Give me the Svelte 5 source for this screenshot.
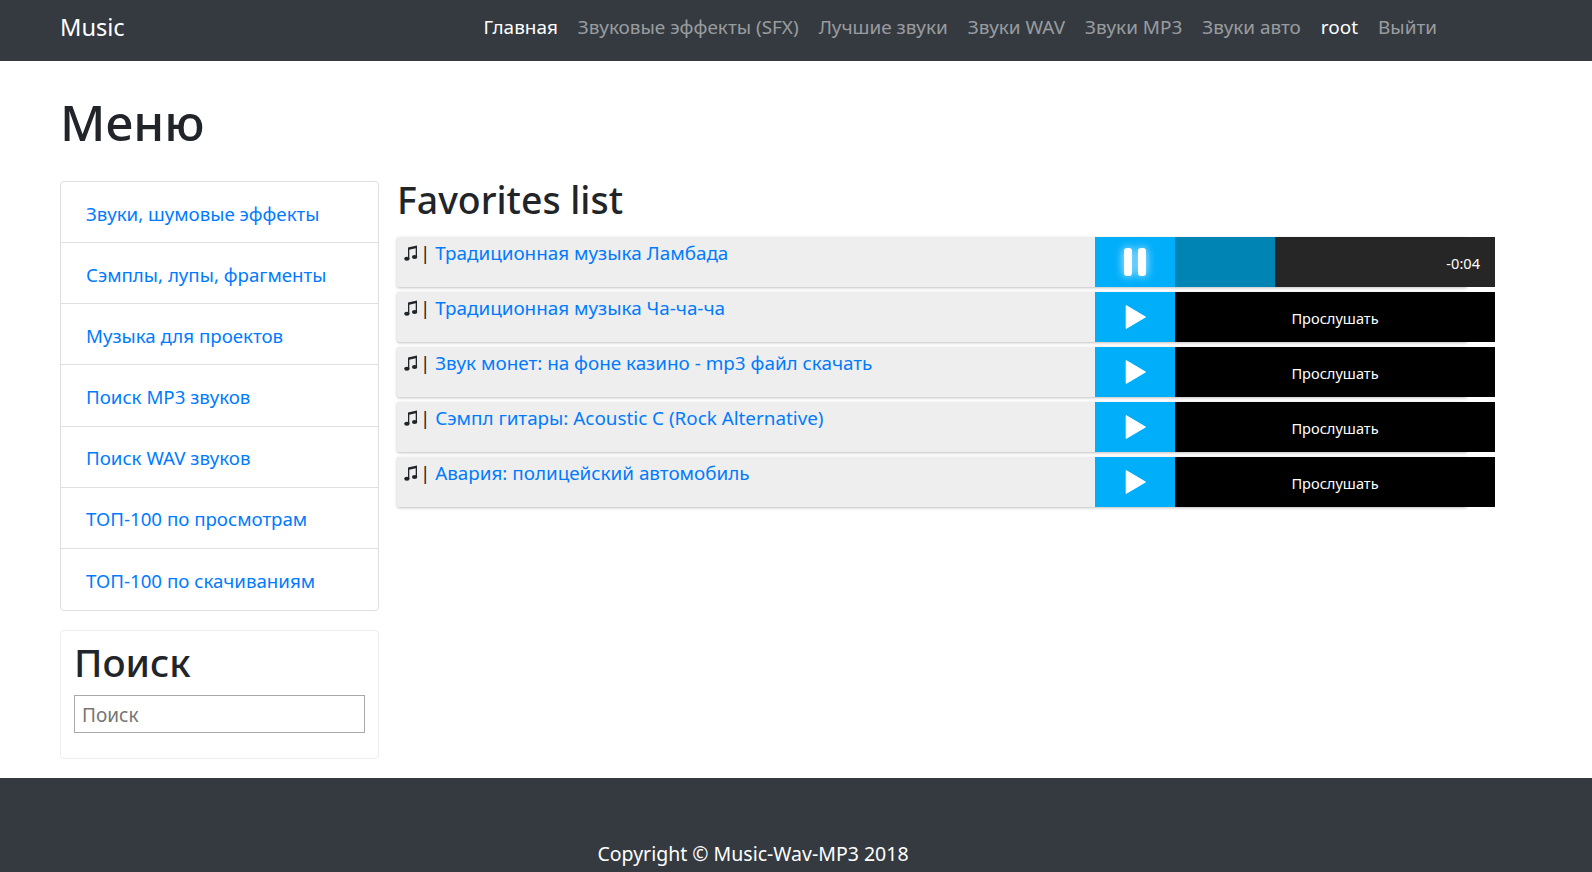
<script>
  const nav = [
    { label: 'Главная', cls: 'on' },
    { label: 'Звуковые эффекты (SFX)' },
    { label: 'Лучшие звуки' },
    { label: 'Звуки WAV' },
    { label: 'Звуки MP3' },
    { label: 'Звуки авто' },
    { label: 'root', cls: 'on' },
    { label: 'Выйти' }
  ];

  const menu = [
    'Звуки, шумовые эффекты',
    'Сэмплы, лупы, фрагменты',
    'Музыка для проектов',
    'Поиск MP3 звуков',
    'Поиск WAV звуков',
    'ТОП-100 по просмотрам',
    'ТОП-100 по скачиваниям'
  ];

  const tracks = [
    { title: 'Традиционная музыка Ламбада', playing: true },
    { title: 'Традиционная музыка Ча-ча-ча' },
    { title: 'Звук монет: на фоне казино - mp3 файл скачать' },
    { title: 'Сэмпл гитары: Acoustic C (Rock Alternative)' },
    { title: 'Авария: полицейский автомобиль' }
  ];
</script>

<nav class="navbar">
  <a class="brand" href="#top">Music</a>
  <ul class="nav-links">
    {#each nav as item}
      <li><a href="#top" class={item.cls}>{item.label}</a></li>
    {/each}
  </ul>
</nav>

<div class="page">
  <h1>Меню</h1>
  <div class="columns">
    <aside>
      <div class="list-group">
        {#each menu as item}
          <a class="list-item" href="#top">{item}</a>
        {/each}
      </div>
      <div class="search-card">
        <h2>Поиск</h2>
        <input type="text" placeholder="Поиск" />
      </div>
    </aside>

    <main>
      <h2 class="fav-title">Favorites list</h2>
      {#each tracks as track}
        <div class="track">
          <div class="track-title">
            <svg class="note" viewBox="0 0 14 16" width="14" height="16" aria-hidden="true">
              <path d="M4 2.6 13 .6V12h-1.300V3.300L5.300 4.800V14H4Z" fill="#212529" />
              <ellipse cx="2.900" cy="13.700" rx="2.700" ry="2" fill="#212529" />
              <ellipse cx="10.600" cy="11.900" rx="2.700" ry="2" fill="#212529" />
            </svg>
            | <a href="#top">{track.title}</a>
          </div>
          <div class="player" class:playing={track.playing}>
            <div class="play-btn">
              {#if track.playing}
                <span class="bars"><i></i><i></i></span>
              {:else}
                <svg viewBox="0 0 21 24" width="21" height="24" aria-hidden="true">
                  <path d="M1.200 .6 20.500 12 1.200 23.400Z" fill="#fff" stroke="#fff" stroke-linejoin="round" />
                </svg>
              {/if}
            </div>
            <div class="bar">
              {#if track.playing}
                <div class="progress"></div>
                <span class="time">-0:04</span>
              {:else}
                <span class="listen">Прослушать</span>
              {/if}
            </div>
          </div>
        </div>
      {/each}
    </main>
  </div>
</div>

<footer>
  <p>Copyright © Music-Wav-MP3 2018</p>
</footer>

<style>
  :global(body) {
    margin: 0;
    font-family: "Noto Sans", "Open Sans", sans-serif;
    font-size: 19px;
    line-height: 1.5;
    color: #212529;
    background: #fff;
  }

  a {
    text-decoration: none;
    color: #007bff;
  }

  .navbar {
    display: flex;
    align-items: center;
    height: 61px;
    padding: 0 60px 6px;
    background: #343a40;
    box-sizing: border-box;
  }

  .brand {
    color: #fff;
    font-size: 23.600px;
  }

  .nav-links {
    display: flex;
    gap: 20px;
    margin: 0 0 0 auto;
    padding: 0 95px 0 0;
    list-style: none;
    font-size: 18.930px;
  }

  .nav-links a {
    color: rgba(255, 255, 255, 0.5);
  }

  .nav-links a.on {
    color: #fff;
  }

  .page {
    padding: 0 60px;
  }

  h1 {
    margin: 0;
    padding-top: 25px;
    height: 95px;
    font-size: 49.500px;
    font-weight: 500;
    line-height: 72px;
    box-sizing: content-box;
  }

  .columns {
    display: flex;
    align-items: flex-start;
    padding-bottom: 19px;
  }

  aside {
    width: 319px;
    flex: none;
  }

  .list-group {
    display: flex;
    flex-direction: column;
    border: 1px solid #dfdfdf;
    border-radius: 4px;
  }

  .list-item {
    height: 61.150px;
    padding: 3px 25px 0;
    display: flex;
    align-items: center;
    box-sizing: border-box;
    border-bottom: 1px solid #dfdfdf;
    font-size: 18.700px;
  }

  .list-item:last-child {
    border-bottom: 0;
  }

  .search-card {
    margin-top: 19px;
    padding: 4px 13px 25px;
    height: 129px;
    box-sizing: border-box;
    border: 1px solid #eee;
    border-radius: 4px;
  }

  .search-card h2 {
    margin: 0 0 6px;
    font-size: 38.400px;
    font-weight: 500;
    line-height: 54px;
  }

  .search-card input {
    display: block;
    width: 100%;
    height: 38px;
    padding: 3px 7px 0;
    box-sizing: border-box;
    border: 1px solid #a9a9a9;
    font: inherit;
    border-radius: 0;
    outline: none;
  }

  .search-card input::placeholder {
    color: #757575;
  }

  main {
    flex: 1;
    margin-left: 18px;
    margin-right: 65px;
    min-width: 0;
  }

  .fav-title {
    margin: -6px 0 13px 0;
    font-size: 37.400px;
    font-weight: 500;
    line-height: 49px;
  }

  .track {
    display: flex;
    justify-content: space-between;
    height: 50px;
    margin-bottom: 5px;
    background: #eee;
    border-radius: 2px;
    box-shadow: 0 1px 3px rgba(0, 0, 0, 0.25);
  }

  .track-title {
    padding-left: 7px;
    font-size: 18.850px;
    line-height: 32px;
    white-space: nowrap;
  }

  .note {
    vertical-align: -1px;
    margin-right: -3px;
  }

  .player {
    display: flex;
    width: 400px;
    height: 50px;
    margin-right: -28px;
    flex: none;
    color: #fff;
    font-size: 14.600px;
  }

  .play-btn {
    width: 80px;
    flex: none;
    display: flex;
    align-items: center;
    justify-content: center;
    background: #00aefa;
  }

  .bars {
    display: flex;
    gap: 6px;
  }

  .bars i {
    display: block;
    width: 8px;
    height: 28px;
    background: #fff;
    border-radius: 3px;
    box-shadow: 0 0 10px rgba(255, 255, 255, 0.85);
  }

  .bar {
    flex: 1;
    position: relative;
    display: flex;
    align-items: center;
    justify-content: center;
    background: #000;
  }

  .playing .bar {
    background: #262626;
  }

  .progress {
    position: absolute;
    left: 0;
    top: 0;
    bottom: 0;
    width: 100px;
    background: #0084b4;
  }

  .time {
    position: absolute;
    right: 15px;
    top: 16px;
    line-height: 20px;
  }

  .listen {
    line-height: 20px;
    padding-top: 2px;
  }

  footer {
    height: 94px;
    box-sizing: border-box;
    padding: 61px 86px 0 0;
    background: #343a40;
    overflow: hidden;
  }

  footer p {
    margin: 0;
    color: #fff;
    text-align: center;
    font-size: 19.500px;
  }
</style>
